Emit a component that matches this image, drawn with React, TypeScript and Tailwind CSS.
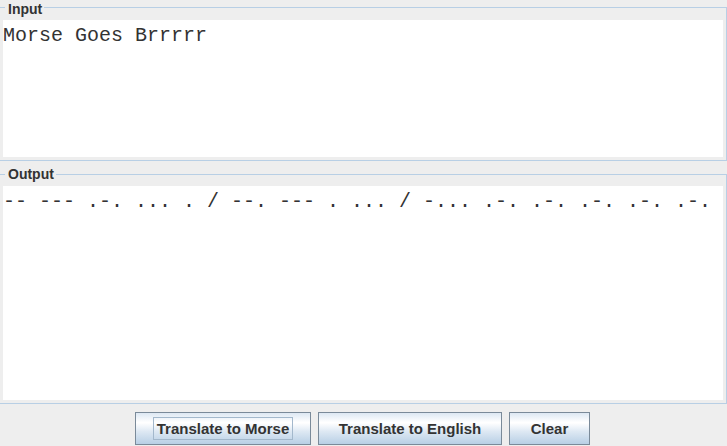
import React from "react";

const mono = { fontFamily: '"Liberation Mono", "Courier New", monospace' };

function Button({ label, width, focused }: { label: string; width: string; focused?: boolean }) {
  return (
    <button
      className={`${width} h-[33px] border border-[#7a8a99] bg-[linear-gradient(to_bottom,#dde8f3_0%,#ffffff_30%,#ffffff_32%,#dde8f3_60%,#b8cfe5_100%)] flex items-center justify-center p-0 text-[15px] font-bold text-[#333333] font-['Liberation_Sans',Arial,sans-serif]`}
    >
      {focused ? (
        <span className="border border-[#a3b8cc] px-[3px] h-[23px] flex items-center leading-none">{label}</span>
      ) : (
        <span className="leading-none">{label}</span>
      )}
    </button>
  );
}

export default function App() {
  const morse = "-- --- .-. ... . / --. --- . ... / -... .-. .-. .-. .-. .-.";
  return (
    <div className="w-[727px] h-[446px] bg-[#eeeeee] overflow-hidden flex flex-col font-['Liberation_Sans',Arial,sans-serif]">
      {/* Input */}
      <div className="relative mt-[7px] h-[154px] border-t border-r border-b border-[#b8cfe5] pt-[12px] pl-[3px] pr-[3px] pb-[3px]">
        <span className="absolute left-[5px] top-[-7px] h-4 leading-4 pl-[3px] pr-[2px] bg-[#eeeeee] text-[14px] font-bold text-[#333333]">
          Input
        </span>
        <div className="h-[137px] bg-white pt-[4px] text-[20px] leading-[23px] text-[#333333] whitespace-pre" style={mono}>
          Morse Goes Brrrrr
        </div>
      </div>

      {/* Output */}
      <div className="relative mt-[13px] h-[230px] border-t border-r border-b border-[#b8cfe5] pt-[11px] pl-[3px] pr-[3px] pb-[3px]">
        <span className="absolute left-[5px] top-[-9px] h-4 leading-4 pl-[3px] pr-[2px] bg-[#eeeeee] text-[14px] font-bold text-[#333333]">
          Output
        </span>
        <div className="h-[214px] bg-white pt-[4px] text-[20px] leading-[23px] text-[#333333] whitespace-pre overflow-hidden" style={mono}>
          {morse}
        </div>
      </div>

      {/* Buttons */}
      <div className="flex gap-[7px] pl-[135px] pt-[8px]">
        <Button label="Translate to Morse" width="w-[176px]" focused />
        <Button label="Translate to English" width="w-[184px]" />
        <Button label="Clear" width="w-[81px]" />
      </div>
    </div>
  );
}
